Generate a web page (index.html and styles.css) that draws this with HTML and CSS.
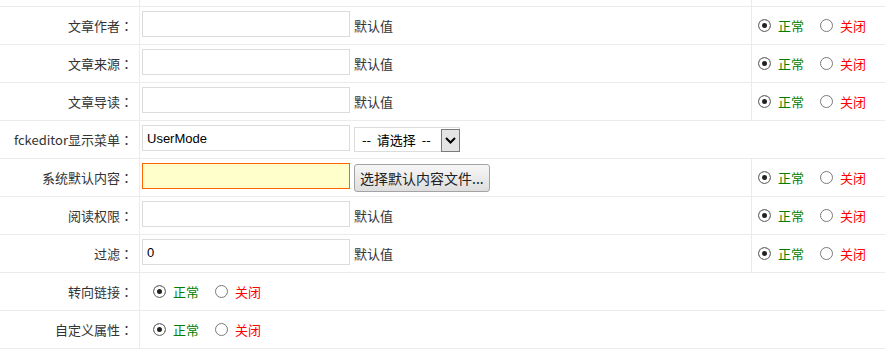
FILE: index.html
```html
<!DOCTYPE html>
<html lang="zh-CN">
<head>
    <meta charset="UTF-8">
    <meta name="viewport" content="width=device-width, initial-scale=1.0">
    <title>栏目设置</title>
    <link rel="stylesheet" href="styles.css">
</head>
<body>
    <div class="form-table">
        <div class="row row-top">
            <div class="cell label"></div>
            <div class="cell field"></div>
            <div class="cell state"></div>
        </div>

        <div class="row">
            <div class="cell label">文章作者：</div>
            <div class="cell field">
                <input type="text" class="txt">
                <span class="hint">默认值</span>
            </div>
            <div class="cell state">
                <label class="opt on"><input type="radio" name="author" checked>正常</label>
                <label class="opt off"><input type="radio" name="author">关闭</label>
            </div>
        </div>

        <div class="row">
            <div class="cell label">文章来源：</div>
            <div class="cell field">
                <input type="text" class="txt">
                <span class="hint">默认值</span>
            </div>
            <div class="cell state">
                <label class="opt on"><input type="radio" name="source" checked>正常</label>
                <label class="opt off"><input type="radio" name="source">关闭</label>
            </div>
        </div>

        <div class="row">
            <div class="cell label">文章导读：</div>
            <div class="cell field">
                <input type="text" class="txt">
                <span class="hint">默认值</span>
            </div>
            <div class="cell state">
                <label class="opt on"><input type="radio" name="intro" checked>正常</label>
                <label class="opt off"><input type="radio" name="intro">关闭</label>
            </div>
        </div>

        <div class="row">
            <div class="cell label">fckeditor显示菜单：</div>
            <div class="cell field wide">
                <input type="text" class="txt" value="UserMode">
                <span class="sel">
                    <select>
                        <option>--&nbsp;&nbsp;请选择&nbsp;&nbsp;--</option>
                        <option>Default</option>
                        <option>Basic</option>
                    </select>
                    <span class="sel-arrow">
                        <svg width="11" height="7" viewBox="0 0 11 7"><path d="M1 1 L5.5 5.5 L10 1" fill="none" stroke="#000" stroke-width="2"/></svg>
                    </span>
                </span>
            </div>
        </div>

        <div class="row">
            <div class="cell label">系统默认内容：</div>
            <div class="cell field">
                <input type="text" class="txt txt-focus">
                <button type="button" class="btn">选择默认内容文件...</button>
            </div>
            <div class="cell state">
                <label class="opt on"><input type="radio" name="content" checked>正常</label>
                <label class="opt off"><input type="radio" name="content">关闭</label>
            </div>
        </div>

        <div class="row">
            <div class="cell label">阅读权限：</div>
            <div class="cell field">
                <input type="text" class="txt">
                <span class="hint">默认值</span>
            </div>
            <div class="cell state">
                <label class="opt on"><input type="radio" name="read" checked>正常</label>
                <label class="opt off"><input type="radio" name="read">关闭</label>
            </div>
        </div>

        <div class="row">
            <div class="cell label">过滤：</div>
            <div class="cell field">
                <input type="text" class="txt" value="0">
                <span class="hint">默认值</span>
            </div>
            <div class="cell state">
                <label class="opt on"><input type="radio" name="filter" checked>正常</label>
                <label class="opt off"><input type="radio" name="filter">关闭</label>
            </div>
        </div>

        <div class="row">
            <div class="cell label">转向链接：</div>
            <div class="cell field wide radios">
                <label class="opt on"><input type="radio" name="redirect" checked>正常</label>
                <label class="opt off"><input type="radio" name="redirect">关闭</label>
            </div>
        </div>

        <div class="row">
            <div class="cell label">自定义属性：</div>
            <div class="cell field wide radios">
                <label class="opt on"><input type="radio" name="attr" checked>正常</label>
                <label class="opt off"><input type="radio" name="attr">关闭</label>
            </div>
        </div>
    </div>
</body>
</html>
```

FILE: styles.css
```css
body {
    margin: 0;
    font-family: "Noto Sans CJK SC", sans-serif;
    font-size: 13px;
    color: #333;
    background-color: #fff;
}

.form-table {
    width: 885px;
}

.row {
    display: grid;
    grid-template-columns: 140px 612px 1fr;
    height: 38px;
    box-sizing: border-box;
    border-bottom: 1px solid #ebebeb;
}

.row-top {
    height: 7px;
}

.cell {
    display: flex;
    align-items: center;
    box-sizing: border-box;
}

/* TC face without locl keeps the full-width colon centred, like the original */
.label {
    justify-content: flex-end;
    padding-right: 6px;
    border-right: 1px solid #ebebeb;
    font-family: "Noto Sans CJK TC", sans-serif;
    font-feature-settings: "locl" 0;
}

.field {
    gap: 4px;
    padding-left: 2px;
    border-right: 1px solid #ebebeb;
}

.field.wide {
    grid-column: span 2;
    border-right: none;
}

.field.radios {
    gap: 0;
    padding-left: 13px;
}

.state {
    padding-left: 6px;
}

.txt {
    width: 208px;
    height: 26px;
    margin: 0 0 3px 0;
    padding: 0 4px;
    box-sizing: border-box;
    border: 1px solid #dcdcdc;
    font-family: "Liberation Sans", sans-serif;
    font-size: 13px;
    color: #000;
    outline: none;
}

.txt-focus {
    background-color: #ffffcc;
    border-color: #ff6600;
}

.hint {
    color: #333;
}

.sel {
    position: relative;
    display: inline-block;
    height: 25px;
}

.sel select {
    appearance: none;
    -webkit-appearance: none;
    width: 106px;
    height: 25px;
    margin: 0;
    padding: 0 0 0 7px;
    border: 1px solid #dcdcdc;
    border-radius: 0;
    background-color: #fff;
    font-family: "Noto Sans CJK SC", sans-serif;
    font-size: 13px;
    color: #000;
}

.sel-arrow {
    position: absolute;
    top: 2px;
    right: 0;
    bottom: 0;
    width: 19px;
    box-sizing: border-box;
    border: 1px solid #7a7a7a;
    background-color: #e4e4e4;
    display: flex;
    align-items: center;
    justify-content: center;
    pointer-events: none;
}

.btn {
    height: 28px;
    margin: 0;
    padding: 0 5px;
    border: 1px solid #a3a3a3;
    border-radius: 3px;
    background: linear-gradient(#f7f7f7, #dedede);
    font-family: "Noto Sans CJK SC", sans-serif;
    font-size: 14px;
    color: #222;
    cursor: pointer;
}

.opt {
    display: inline-flex;
    align-items: center;
    gap: 7px;
    margin-right: 16px;
    cursor: pointer;
}

.opt.on {
    color: #008000;
}

.opt.off {
    color: #ff0000;
}

.opt input {
    appearance: none;
    -webkit-appearance: none;
    width: 13px;
    height: 13px;
    margin: 0;
    border: 1px solid #7a7a7a;
    border-radius: 50%;
    background-color: #fff;
    box-sizing: border-box;
}

.opt input:checked {
    background-color: #222;
    box-shadow: inset 0 0 0 3px #fff;
}
```
